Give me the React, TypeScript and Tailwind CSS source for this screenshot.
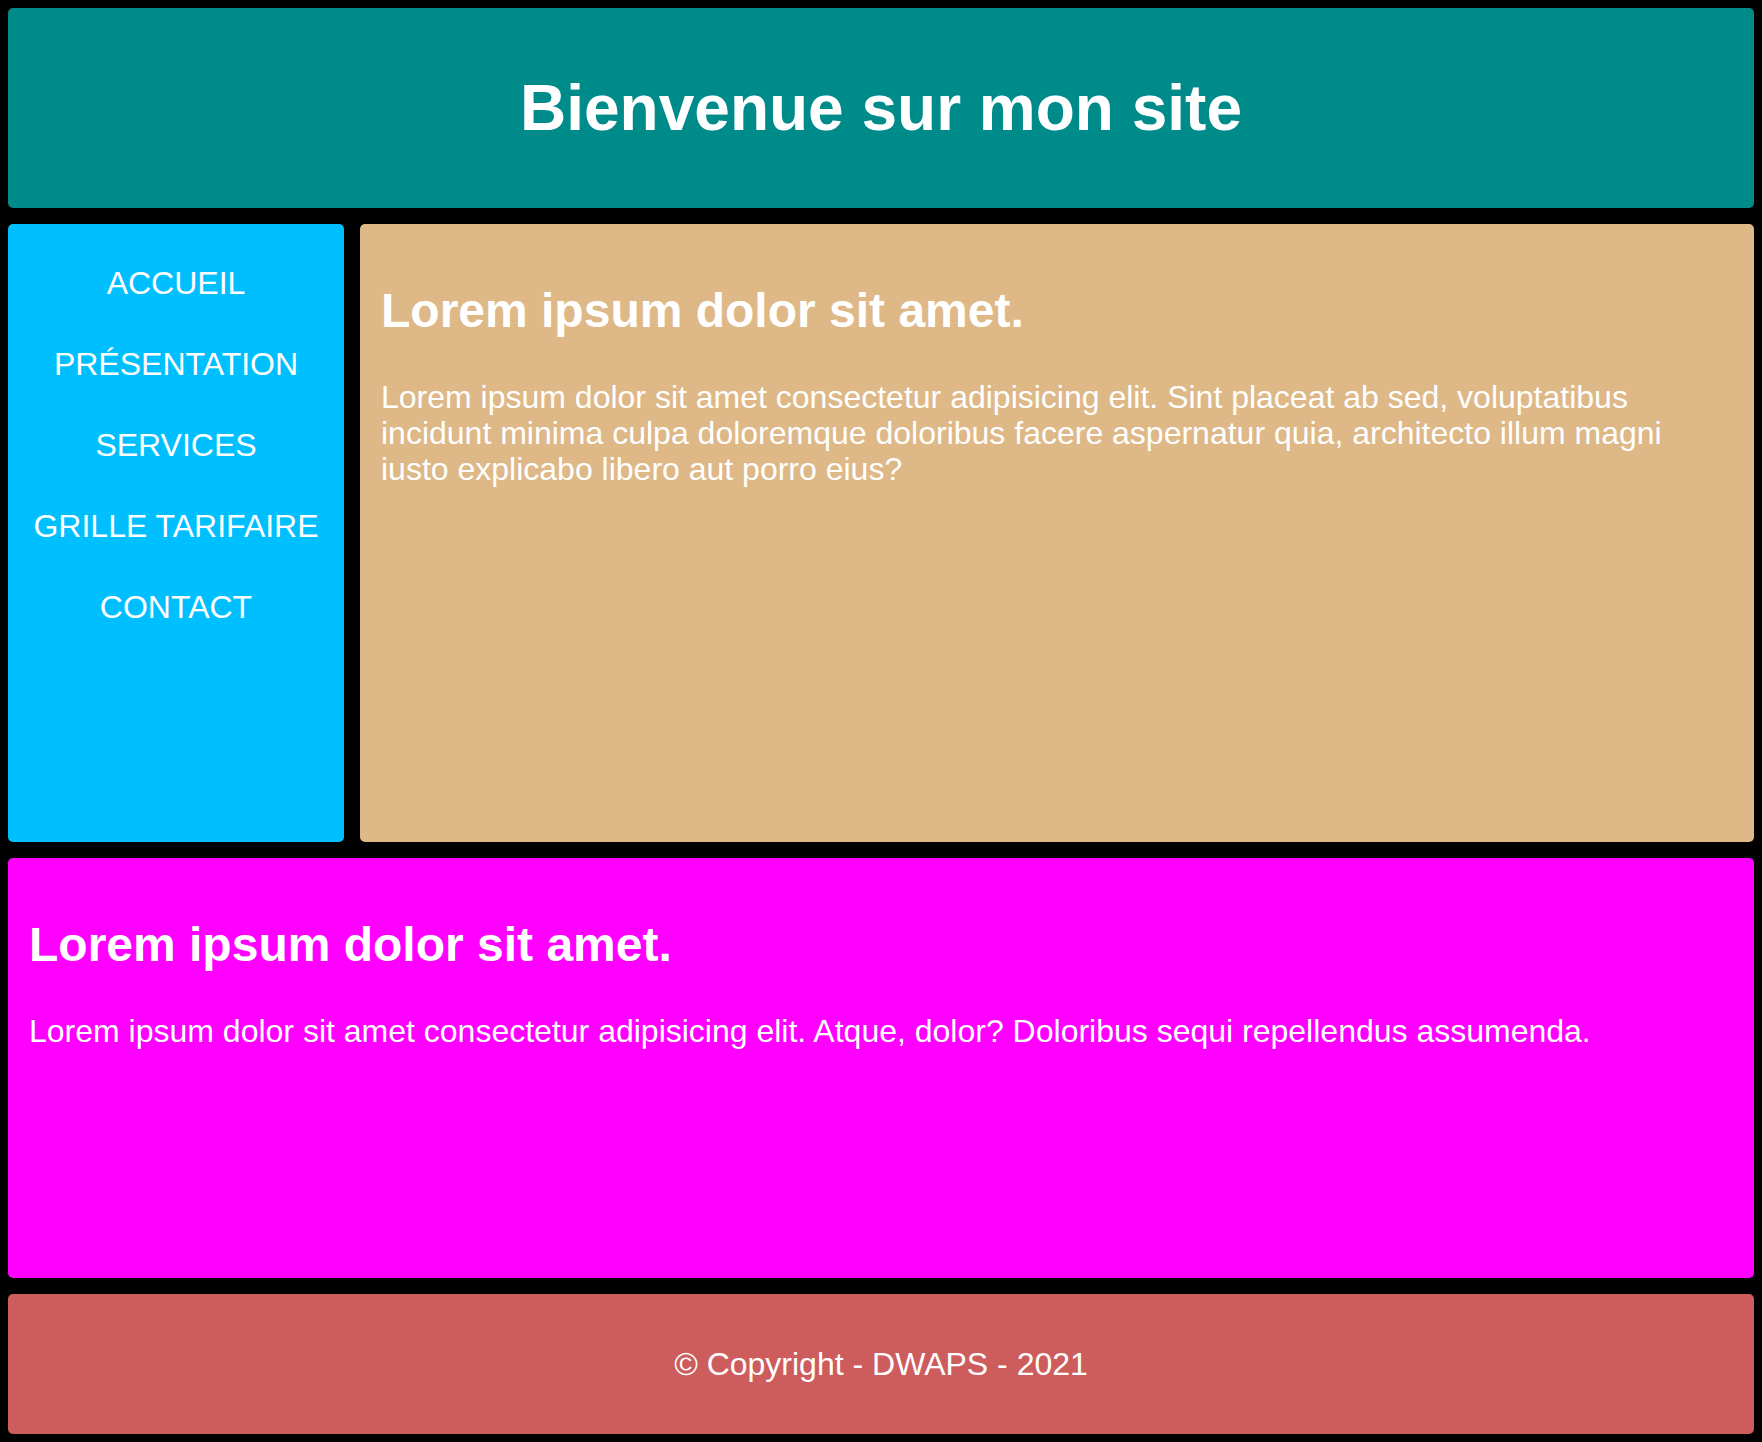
const navItems = ['ACCUEIL', 'PRÉSENTATION', 'SERVICES', 'GRILLE TARIFAIRE', 'CONTACT'];

export default function App() {
  return (
    <div className="min-h-screen bg-black p-2 font-['Liberation_Sans',Arial,sans-serif] text-white">
      <div className="grid grid-rows-[200px_618px_420px_140px] gap-4">
        <header className="flex items-center justify-center rounded-[5px] bg-[#008b8b]">
          <h1 className="text-[64px] font-bold leading-[74px]">Bienvenue sur mon site</h1>
        </header>

        <div className="grid grid-cols-[336px_1fr] gap-4">
          <nav className="rounded-[5px] bg-[#00bfff] pt-[41px]">
            <ul className="flex flex-col items-center gap-[44px]">
              {navItems.map((item) => (
                <li key={item}>
                  <a href="#" className="text-[32px] leading-[37px]">
                    {item}
                  </a>
                </li>
              ))}
            </ul>
          </nav>

          <main className="rounded-[5px] bg-[#deb887] px-[21px] pt-[59px]">
            <h2 className="text-[48px] font-bold leading-[55px]">Lorem ipsum dolor sit amet.</h2>
            <p className="mt-[41px] text-[32px] leading-[36px]">
              Lorem ipsum dolor sit amet consectetur adipisicing elit. Sint placeat ab sed, voluptatibus
              incidunt minima culpa doloremque doloribus facere aspernatur quia, architecto illum magni
              iusto explicabo libero aut porro eius?
            </p>
          </main>
        </div>

        <section className="rounded-[5px] bg-[#ff00ff] px-[21px] pt-[59px]">
          <h2 className="text-[48px] font-bold leading-[55px]">Lorem ipsum dolor sit amet.</h2>
          <p className="mt-[41px] text-[32px] leading-[36px]">
            Lorem ipsum dolor sit amet consectetur adipisicing elit. Atque, dolor? Doloribus sequi repellendus assumenda.
          </p>
        </section>

        <footer className="flex items-center justify-center rounded-[5px] bg-[#cd5c5c]">
          <p className="text-[32px] leading-[37px]">© Copyright - DWAPS - 2021</p>
        </footer>
      </div>
    </div>
  );
}
